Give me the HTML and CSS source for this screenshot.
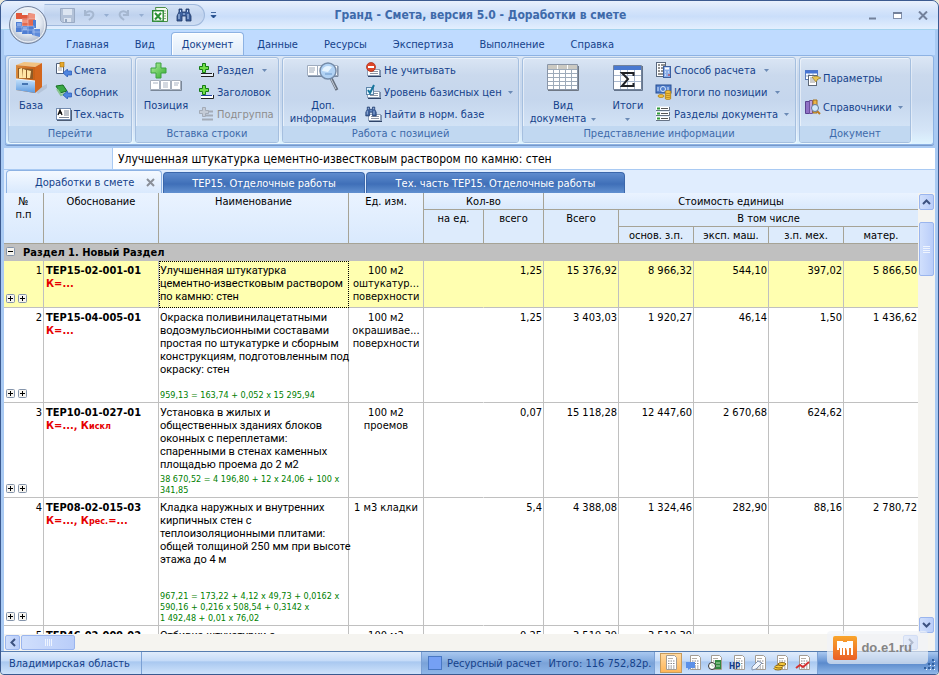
FILE: index.html
```html
<!DOCTYPE html>
<html lang="ru">
<head>
<meta charset="utf-8">
<title>Гранд - Смета, версия 5.0 - Доработки в смете</title>
<link rel="stylesheet" href="styles.css">
</head>
<body>
<svg class="defs" aria-hidden="true">
  <defs>
    <linearGradient id="wood" x1="0" x2="1"><stop offset="0" stop-color="#d98a3c"/><stop offset="1" stop-color="#c85f16"/></linearGradient>
    <linearGradient id="drawer" x1="0" x2="0" y2="1"><stop offset="0" stop-color="#c6e2fb"/><stop offset="1" stop-color="#5e9be0"/></linearGradient>
    <linearGradient id="green" x1="0" x2="1" y2="1"><stop offset="0" stop-color="#b4f0a0"/><stop offset="1" stop-color="#2faa2c"/></linearGradient>
    <linearGradient id="orange" x1="0" x2="0" y2="1"><stop offset="0" stop-color="#f9a52c"/><stop offset="1" stop-color="#ea5f26"/></linearGradient>
    <radialGradient id="orb" cx=".5" cy=".4" r=".7"><stop offset="0" stop-color="#fff"/><stop offset=".5" stop-color="#e3e9f1"/><stop offset="1" stop-color="#8f9db5"/></radialGradient>
    <symbol id="arrow-left" viewBox="0 0 9 8"><path d="M0 4 4.500 0v2H8.500v4H4.500v2z" fill="#4f86e0" stroke="#2356b4" stroke-width=".7"/></symbol>
    <symbol id="caret" viewBox="0 0 5 3"><path d="M0 0h5L2.500 3z" fill="#6b8ab5"/></symbol>
    <symbol id="plus-box" viewBox="0 0 9 9"><rect x=".5" y=".5" width="8" height="8" rx="1" fill="#f6f4ef" stroke="#8494ab"/><path d="M2 4.500h5M4.500 2v5" stroke="#000"/></symbol>
    <symbol id="minus-box" viewBox="0 0 9 9"><rect x=".5" y=".5" width="8" height="8" rx="1" fill="#f6f4ef" stroke="#8494ab"/><path d="M2 4.500h5" stroke="#000"/></symbol>
    <symbol id="binoculars" viewBox="0 0 16 14"><path d="M3 1h3v3h4V1h3v3l2 4v5h-5V8H6v5H1V8l2-4z" fill="#3d609c" stroke="#1d3566" stroke-width=".8"/><path d="M3 6v5M4.500 2v2M12 6v5M11.500 2v2M8 5v2" stroke="#bcd4f5"/></symbol>
    <symbol id="card" viewBox="0 0 14 8"><rect x=".5" y=".5" width="12" height="6" fill="#fff" stroke="#8fa0b8"/><path d="M1 7.500h13V1" stroke="#2f4468" fill="none"/><path d="M3 2.500h8M3 4.500h8" stroke="#8d96a5"/></symbol>
    <symbol id="sheet" viewBox="0 0 13 15"><path d="M1.500.5h8l2 2v12h-10z" fill="#fff" stroke="#a39c93"/><path d="M3 3.500h5" stroke="#b5aea5"/><path d="M3 6h7M3 8.500h7M3 11h7M3 13h7" stroke="#888" stroke-dasharray="1.500 1"/></symbol>
  </defs>
</svg>
<div class="window">
  <header class="titlebar">
    <div class="quick-access">
      <button aria-label="Сохранить"><svg width="15" height="15" viewBox="0 0 15 15"><path d="M.5.5h14v14h-12l-2-2z" fill="#b3c2d8" stroke="#9aabc4"/><path d="M3 1h9v6H3zM4 10h7v4H4z" fill="#dce5f1"/><path d="M5 11h2v3H5z" fill="#94a6c0"/></svg></button>
      <button aria-label="Отменить"><svg width="13" height="12" viewBox="0 0 13 12"><path d="M2 1v5h5M2 5c4-5 10-2 8 2-1 2-3 3-4 4" fill="none" stroke="#a5b7d0" stroke-width="2"/></svg></button>
      <svg class="dim" width="5" height="3"><use href="#caret"/></svg>
      <button aria-label="Вернуть"><svg width="13" height="12" viewBox="0 0 13 12"><path d="M11 1v5H6M11 5C7 0 1 3 3 7c1 2 3 3 4 4" fill="none" stroke="#a5b7d0" stroke-width="2"/></svg></button>
      <svg class="dim" width="5" height="3"><use href="#caret"/></svg>
      <button aria-label="Экспорт в таблицу"><svg width="16" height="16" viewBox="0 0 16 16"><path d="M3.500.5h10l2 2v12h-10z" fill="#f2f8ee" stroke="#4b8c47"/><path d="M12 4h2M12 6.500h2M12 9h2M12 11.500h2" stroke="#8cad88"/><rect x=".7" y="3.700" width="10.500" height="10.500" fill="#fff" stroke="#288830" stroke-width="1.400"/><path d="m3 6 6 6.500M9 6l-6 6.500" stroke="#2c9236" stroke-width="2"/></svg></button>
      <button aria-label="Найти"><svg width="16" height="14"><use href="#binoculars"/></svg></button>
    </div>
    <button class="qat-more" aria-label="Настройка панели"><svg width="7" height="7" viewBox="0 0 7 7"><path d="M1 .5h5M1 3.500h5L3.500 6z" fill="#1e4a8a" stroke="#1e4a8a" stroke-width=".8"/></svg></button>
    <h1>Гранд - Смета, версия 5.0 - Доработки в смете</h1>
    <div class="window-buttons">
      <button aria-label="Свернуть"><svg width="9" height="9"><path d="M1 7.500h7" stroke="#73819b" stroke-width="2"/></svg></button>
      <button aria-label="Развернуть"><svg width="9" height="9" viewBox="0 0 9 9"><rect x=".5" y="1.500" width="8" height="6" fill="#fff" stroke="#8290aa"/><path d="M0 2h9" stroke="#73819b" stroke-width="2"/></svg></button>
      <button aria-label="Закрыть"><svg width="10" height="9" viewBox="0 0 10 9"><path d="m1 .5 8 8M9 .5l-8 8" stroke="#73819b" stroke-width="2"/></svg></button>
    </div>
  </header>
  <button class="orb" aria-label="Меню программы"><svg width="40" height="40" viewBox="0 0 40 40"><circle cx="20" cy="20" r="18.500" fill="url(#orb)" stroke="#74839e"/><circle cx="20" cy="20" r="17" fill="none" stroke="#f5f8fc"/>
    <path d="M8 8h6v6H8zM14 10h6v4h-6z" fill="#e0583c"/><path d="M14 14h7v7h-7zM20 8l7 1v12h-7z" fill="#e4694f"/><path d="M21 9h6v5h-6zM14 15h6v3h-6z" fill="#f0937d"/><path d="M8 17h6v10H8zM14 21h12v8H14zM25 15h3v8h-3z" fill="#4f7ed3"/><path d="M24 24h8v8l-8-2z" fill="#5f8cdb"/><path d="M9 18h4v3H9zM15 22h4v3h-4z" fill="#89acea"/><path d="M8 22h6M14 25h12M14 14v14M20 8v21M26 21v10M14 14h13M14 21h12M24 27h8" stroke="#e3eaf7" stroke-width=".4"/></svg></button>
  <nav class="ribbon-tabs">
    <a href="#">Главная</a><a href="#">Вид</a><a href="#" class="current">Документ</a><a href="#">Данные</a><a href="#">Ресурсы</a><a href="#">Экспертиза</a><a href="#">Выполнение</a><a href="#">Справка</a>
  </nav>
  <section class="ribbon">
    <div class="group go">
      <div class="tools">
        <button class="big"><svg width="32" height="34" viewBox="0 0 32 34"><path d="M20 29 32 23v4l-9 6z" fill="#a9b7cb" opacity=".6"/><path d="M1 4 9 1l18 1-7 4z" fill="#f2c281"/><path d="M1 4l19 2v26L1 29z" fill="url(#wood)"/><path d="M20 6l7-4v24l-7 6z" fill="#d3661d"/><path d="M3 7l15 1v10L3 17z" fill="#8d5a26"/><path d="M4 8l3-1 1 10H4zM8 8l3 1v8H8zM12 9l4 1-1 7h-3z" fill="#ffe5a5"/><path d="M1 18l19 2v12L1 29z" fill="url(#drawer)"/><path d="M1 18l19 2" stroke="#eaf6ff"/><path d="M7 23h6" stroke="#4575b2" stroke-width="2"/></svg><span>База</span></button>
        <div class="small-tools">
          <button><svg width="18" height="16" viewBox="0 0 18 16"><path d="M1.500 1.500h7v10h-7z" fill="#fff" stroke="#50617c"/><path d="M5 0h4v5H5z" fill="#e6a82c" stroke="#a16d0b" stroke-width=".6"/><path d="M3 6h4M3 8h4" stroke="#aaa"/><use href="#arrow-left" x="8" y="7" width="9" height="8"/></svg>Смета</button>
          <button><svg width="18" height="16" viewBox="0 0 18 16"><path d="m1 2 7-1 4 6-7 2z" fill="#39a845" stroke="#166f21"/><path d="m2 5 4 6 6-2" fill="none" stroke="#8ac591" stroke-width="2"/><use href="#arrow-left" x="8" y="7" width="9" height="8"/></svg>Сборник</button>
          <button><svg width="18" height="16" viewBox="0 0 18 16"><rect x="1.500" y="2.500" width="14" height="11" fill="#fff" stroke="#738cb0"/><path d="M2 14.500h14.500V4" fill="none" stroke="#4d5c74"/><path d="m3 9 2-5 2 5M4 7h3" fill="none" stroke="#111" stroke-width="1.300"/><path d="M9 5h5M9 7h5M9 9h5M4 11.500h10" stroke="#7c8797"/></svg>Тех.часть</button>
        </div>
      </div>
      <h2>Перейти</h2>
    </div>
    <div class="group insert">
      <div class="tools">
        <button class="big"><svg width="32" height="34" viewBox="0 0 32 34"><path d="M6 2h5v5h5v5h-5v5H6v-5H1V7h5z" fill="url(#green)" stroke="#3ca241"/><path d="M.5 19.500h9v9h-9zM10.500 19.500h10v9h-10zM21.500 19.500h9v9h-9z" fill="#fff" stroke="#a7b0bd"/><path d="M.5 29.500h31V20" fill="none" stroke="#7a8798"/><path d="M3 22h5M13 22h5M13 24h5M13 26h5M24 22h5M24 24h4" stroke="#a9b3c2"/></svg><span>Позиция</span></button>
        <div class="small-tools">
          <button><svg width="18" height="16" viewBox="0 0 18 16"><path d="M3 12.500h12" stroke="#e8f1fb" stroke-width="3"/><path d="M3 11.500h11M3 14.500h12.500V11" fill="none" stroke="#222"/><path d="M4.500 1.500h3v3h3v3h-3v3h-3v-3h-3v-3h3z" fill="#72dd48" stroke="#147b15"/></svg>Раздел<svg class="drop" width="5" height="3"><use href="#caret"/></svg></button>
          <button><svg width="18" height="16" viewBox="0 0 18 16"><path d="M3 12.500h12" stroke="#fff" stroke-width="3"/><path d="M3 11.500h11" stroke="#2646a3"/><path d="M3 14.500h12.500V11" fill="none" stroke="#222"/><path d="M4.500 1.500h3v3h3v3h-3v3h-3v-3h-3v-3h3z" fill="#72dd48" stroke="#147b15"/></svg>Заголовок</button>
          <button disabled><svg width="18" height="16" viewBox="0 0 18 16"><path d="M8 5.500h7M8 9.500h7M4 13.500h11" stroke="#a3abb7" stroke-width="2"/><path d="M4.500 1.500h3v3h3v3h-3v3h-3v-3h-3v-3h3z" fill="#c4cbd6" stroke="#a3abb7"/></svg>Подгруппа</button>
        </div>
      </div>
      <h2>Вставка строки</h2>
    </div>
    <div class="group position">
      <div class="tools">
        <button class="big"><svg width="32" height="34" viewBox="0 0 32 34"><path d="M.5 4.500h10v10H.5zM10.500 4.500h20v10h-20z" fill="#fff" stroke="#9facbe"/><path d="M1 15.500h30V5" fill="none" stroke="#75859c"/><path d="M2 7h6M2 9h6M2 11h5" stroke="#9ca8b8"/><path d="m24 17 6 12" stroke="#656f7d" stroke-width="3"/><path d="m24 18 5 10" stroke="#c9d2dd"/><circle cx="21" cy="10" r="8" fill="#b1d2f4" stroke="#748ba9" stroke-width="1.500"/><path d="M15 10c1-5 6-6 10-4l-4 5z" fill="#e6f4ff"/><path d="M18 13h7" stroke="#6c99cb"/></svg><span>Доп.<br>информация</span></button>
        <div class="small-tools">
          <button><svg width="18" height="16" viewBox="0 0 18 16"><use href="#card" x="2" y="7" width="14" height="8"/><circle cx="6" cy="5" r="4.500" fill="#df472b" stroke="#a92b14" stroke-width=".7"/><path d="M3 5h6" stroke="#fff" stroke-width="2"/></svg>Не учитывать</button>
          <button><svg width="18" height="16" viewBox="0 0 18 16"><use href="#card" x="2" y="7" width="14" height="8"/><rect x="1.500" y="3.500" width="7" height="7" fill="#e1f1fc" stroke="#5e86aa"/><path d="m3 6 2 3 4-8" fill="none" stroke="#16759c" stroke-width="2"/></svg>Уровень базисных цен<svg class="drop near" width="5" height="3"><use href="#caret"/></svg></button>
          <button><svg width="18" height="16" viewBox="0 0 18 16"><use href="#card" x="3" y="8" width="14" height="8"/><use href="#binoculars" x="0" y="0" width="12" height="11"/></svg>Найти в норм. базе</button>
        </div>
      </div>
      <h2>Работа с позицией</h2>
    </div>
    <div class="group display">
      <div class="tools">
        <button class="big"><svg width="32" height="34" viewBox="0 0 32 34"><path d="M.5 3.500h30v25H.5z" fill="#fff" stroke="#8995a7"/><path d="M1 4h29v4H1z" fill="#cbc9c2"/><path d="M1 8.500h29M1 12.500h29M1 16.500h29M1 20.500h29M1 24.500h29M6.500 8v20M12.500 8v20M18.500 8v20M24.500 8v20" stroke="#9eabba"/><path d="M10.500 4v4M20.500 4v4" stroke="#fff"/><path d="M1 29.500h30.500V5" fill="none" stroke="#6f7885"/></svg><span>Вид<br>документа<svg class="drop near" width="5" height="3"><use href="#caret"/></svg></span></button>
        <button class="big totals"><svg width="32" height="34" viewBox="0 0 32 34"><path d="M1.500 4.500h28v24h-28z" fill="#fff" stroke="#73839b"/><path d="M2 5h27v4H2z" fill="#4979d0"/><path d="M2 14.500h27M2 20.500h27M8.500 9v19M15.500 9v19M22.500 9v19" stroke="#a9b8cf"/><path d="M2 29.500h28.500V5" fill="none" stroke="#65758c"/><path d="M21.500 15v-3H10l6 6-6 7h11.500v-3" fill="none" stroke="#202226" stroke-width="2"/></svg><span>Итоги<br><svg class="below" width="5" height="3"><use href="#caret"/></svg></span></button>
        <div class="small-tools">
          <button><svg width="18" height="16" viewBox="0 0 18 16"><rect x="1.500" y=".5" width="9" height="14" fill="#fff" stroke="#59687e"/><path d="M3 3h2M6 3h4M3 6h2M6 6h3M3 9h2M6 9h3M3 12h5" stroke="#222"/><rect x="8.500" y="4.500" width="7" height="11" fill="#8caee8" stroke="#3c60a1"/><path d="M10 6.500h4" stroke="#fff" stroke-width="2"/><path d="M10 10h1M13 10h1M10 13h1" stroke="#fff"/><path d="M13 13h2" stroke="#d12b2b"/></svg>Способ расчета<svg class="drop" width="5" height="3"><use href="#caret"/></svg></button>
          <button><svg width="18" height="16" viewBox="0 0 18 16"><rect x="1" y="1" width="15" height="8" fill="#5481cd" stroke="#254c91"/><circle cx="8" cy="5" r="2.500" fill="none" stroke="#d7e8ff"/><path d="M3 3v4M13 3v4" stroke="#d7e8ff"/><g fill="#f4c440" stroke="#a8750d" stroke-width=".7"><ellipse cx="6" cy="12" rx="3" ry="1.500"/><ellipse cx="13" cy="14" rx="3" ry="1.500"/><ellipse cx="13" cy="12" rx="3" ry="1.500"/><ellipse cx="13" cy="10" rx="3" ry="1.500"/><ellipse cx="13" cy="8" rx="3" ry="1.500"/></g></svg>Итоги по позиции<svg class="drop" width="5" height="3"><use href="#caret"/></svg></button>
          <button><svg width="18" height="16" viewBox="0 0 18 16"><path d="M1 2.500h13M1 7.500h13M1 12.500h13" stroke="#fff" stroke-width="4"/><path d="M1 4.500h13.500V1M1 9.500h13.500V6M1 14.500h13.500V11" fill="none" stroke="#667386"/><path d="M2 2.500h3M2 7.500h3M2 12.500h3" stroke="#2d9a35" stroke-width="2"/><path d="M6 2.500h7M6 7.500h7M6 12.500h7" stroke="#555"/></svg>Разделы документа<svg class="drop near" width="5" height="3"><use href="#caret"/></svg></button>
        </div>
      </div>
      <h2>Представление информации</h2>
    </div>
    <div class="group document">
      <div class="tools">
        <div class="small-tools">
          <button><svg width="18" height="16" viewBox="0 0 18 16"><rect x="1.500" y=".5" width="12" height="9" fill="#fff" stroke="#587abb"/><path d="M1 2h13" stroke="#4775d4" stroke-width="3"/><path d="M2 6h11M5 3v6M9 3v6" stroke="#8dabd6"/><rect x="4.500" y="5.500" width="8" height="10" fill="#fff" stroke="#5d6877"/><path d="M6 8h4M6 10h5M6 12h5" stroke="#999"/><path d="m8 7 5-1 4 2-3 1-2 3z" fill="#e9c451" stroke="#877024" stroke-width=".6"/></svg>Параметры</button>
          <button><svg width="18" height="16" viewBox="0 0 18 16"><path d="M1.500 2.500h4v12h-4z" fill="#9071c5" stroke="#5b4290"/><path d="M5.500 1.500h3v13h-3z" fill="#bda2dd" stroke="#6e51a0"/><path d="M9 1h4v13H9z" fill="#eab348" stroke="#a2711a"/><path d="m12 11 4 4" stroke="#bd7a22" stroke-width="2"/><circle cx="11" cy="9" r="3.500" fill="#d0e7fa" stroke="#60789a"/></svg>Справочники<svg class="drop near" width="5" height="3"><use href="#caret"/></svg></button>
        </div>
      </div>
      <h2>Документ</h2>
    </div>
  </section>
  <div class="formula-bar"><input type="text" aria-label="Содержимое ячейки" value="Улучшенная штукатурка цементно-известковым раствором по камню: стен"></div>
  <nav class="doc-tabs">
    <div class="doc-tab open"><a href="#">Доработки в смете</a><button aria-label="Закрыть вкладку"><svg width="9" height="9" viewBox="0 0 9 9"><path d="m1 1 7 7M8 1 1 8" stroke="#8a8f98" stroke-width="2"/></svg></button></div>
    <a class="doc-tab" href="#">ТЕР15. Отделочные работы</a>
    <a class="doc-tab wide" href="#">Тех. часть ТЕР15. Отделочные работы</a>
  </nav>
  <main class="sheet">
    <div class="viewport">
      <table>
        <colgroup><col class="c-no"><col class="c-code"><col class="c-name"><col class="c-cost"><col class="c-qty"><col class="c-qty"><col class="c-cost"><col class="c-cost"><col class="c-cost"><col class="c-cost"><col></colgroup>
        <thead>
          <tr><th rowspan="3">№<br>п.п</th><th rowspan="3">Обоснование</th><th rowspan="3">Наименование</th><th rowspan="3">Ед. изм.</th><th colspan="2">Кол-во</th><th colspan="5">Стоимость единицы</th></tr>
          <tr><th rowspan="2">на ед.</th><th rowspan="2">всего</th><th rowspan="2">Всего</th><th colspan="4">В том числе</th></tr>
          <tr><th>основ. з.п.</th><th>эксп. маш.</th><th>з.п. мех.</th><th>матер.</th></tr>
        </thead>
        <tbody>
          <tr class="section-row"><td colspan="11"><svg width="9" height="9"><use href="#minus-box"/></svg>Раздел 1. Новый Раздел</td></tr>
          <tr class="short selected"><td><div class="fill num">1<span><svg width="9" height="9"><use href="#plus-box"/></svg><svg width="9" height="9"><use href="#plus-box"/></svg></span></div></td><td class="code">ТЕР15-02-001-01<em>К=...</em></td><td class="focus">Улучшенная штукатурка<br>цементно-известковым раствором<br>по камню: стен</td><td class="unit">100 м2<br>оштукатур...<br>поверхности</td><td class="none"></td><td>1,25</td><td>15 376,92</td><td>8 966,32</td><td>544,10</td><td>397,02</td><td>5 866,50</td></tr>
          <tr class="medium"><td><div class="fill num">2<span><svg width="9" height="9"><use href="#plus-box"/></svg><svg width="9" height="9"><use href="#plus-box"/></svg></span></div></td><td class="code">ТЕР15-04-005-01<em>К=...</em></td><td><div class="fill name">Окраска поливинилацетатными<br>водоэмульсионными составами<br>простая по штукатурке и сборным<br>конструкциям, подготовленным под<br>окраску: стен<small>959,13 = 163,74 + 0,052 x 15 295,94</small></div></td><td class="unit">100 м2<br>окрашивае...<br>поверхности</td><td class="none"></td><td>1,25</td><td>3 403,03</td><td>1 920,27</td><td>46,14</td><td>1,50</td><td>1 436,62</td></tr>
          <tr class="medium"><td><div class="fill num">3<span><svg width="9" height="9"><use href="#plus-box"/></svg><svg width="9" height="9"><use href="#plus-box"/></svg></span></div></td><td class="code">ТЕР10-01-027-01<em>К=..., К<sub>искл</sub></em></td><td><div class="fill name">Установка в жилых и<br>общественных зданиях блоков<br>оконных с переплетами:<br>спаренными в стенах каменных<br>площадью проема до 2 м2<small>38 670,52 = 4 196,80 + 12 x 24,06 + 100 x<br>341,85</small></div></td><td class="unit">100 м2<br>проемов</td><td class="none"></td><td>0,07</td><td>15 118,28</td><td>12 447,60</td><td>2 670,68</td><td>624,62</td><td></td></tr>
          <tr class="tall"><td><div class="fill num">4<span><svg width="9" height="9"><use href="#plus-box"/></svg><svg width="9" height="9"><use href="#plus-box"/></svg></span></div></td><td class="code">ТЕР08-02-015-03<em>К=..., К<sub>рес.</sub>=...</em></td><td><div class="fill name">Кладка наружных и внутренних<br>кирпичных стен с<br>теплоизоляционными плитами:<br>общей толщиной 250 мм при высоте<br>этажа до 4 м<small>967,21 = 173,22 + 4,12 x 49,73 + 0,0162 x<br>590,16 + 0,216 x 508,54 + 0,3142 x<br>1 492,48 + 0,01 x 76,02</small></div></td><td class="unit">1 м3 кладки</td><td class="none"></td><td>5,4</td><td>4 388,08</td><td>1 324,46</td><td>282,90</td><td>88,16</td><td>2 780,72</td></tr>
          <tr class="short"><td>5</td><td class="code">ТЕР46-02-009-02</td><td class="name">Отбивка штукатурки с</td><td class="unit">100 м2</td><td class="none"></td><td>0,25</td><td>3 519,39</td><td>3 519,39</td><td></td><td></td><td></td></tr>
        </tbody>
      </table>
    </div>
    <div class="vscroll">
      <button aria-label="Вверх"><svg width="9" height="6" viewBox="0 0 9 6"><path d="m1 5 3.500-3.500L8 5" fill="none" stroke="#3d5280" stroke-width="2"/></svg></button>
      <div class="track"><div class="thumb"><i></i><i></i><i></i><i></i></div></div>
      <button aria-label="Вниз"><svg width="9" height="6" viewBox="0 0 9 6"><path d="m1 1 3.500 3.500L8 1" fill="none" stroke="#3d5280" stroke-width="2"/></svg></button>
    </div>
    <div class="hscroll">
      <button aria-label="Влево"><svg width="6" height="9" viewBox="0 0 6 9"><path d="M5 1 1.500 4.500 5 8" fill="none" stroke="#3d5280" stroke-width="2"/></svg></button>
      <div class="track"><div class="thumb"><i></i><i></i><i></i><i></i></div></div>
      <button aria-label="Вправо"><svg width="6" height="9" viewBox="0 0 6 9"><path d="m1 1 3.500 3.500L1 8" fill="none" stroke="#3d5280" stroke-width="2"/></svg></button>
    </div>
  </main>
  <footer class="status">
    <span class="region">Владимирская область</span>
    <span class="spacer"></span>
    <span class="calc"><i class="swatch"></i>Ресурсный расчет<b>Итого: 116 752,82р.</b></span>
    <span class="modes">
      <button class="on" aria-label="Смета"><svg width="17" height="16" viewBox="0 0 17 16"><use href="#sheet" x="2" width="13" height="15"/></svg></button>
      <button aria-label="Комментарий"><svg width="17" height="16" viewBox="0 0 17 16"><use href="#sheet" x="4" width="13" height="15"/><path d="M1 7h9v6H6l-3 2v-2H1z" fill="#5c91e8"/></svg></button>
      <button aria-label="Сроки"><svg width="17" height="16" viewBox="0 0 17 16"><use href="#sheet" x="3" width="13" height="15"/><path d="M8 5h6v9H8z" fill="#31893d"/><circle cx="5" cy="11" r="3.500" fill="#fff" stroke="#333"/><path d="M5 9v2h2M9 8h4M9 11h4" fill="none" stroke="#b8deb9"/></svg></button>
      <button aria-label="Накладные расходы"><svg width="17" height="16" viewBox="0 0 17 16"><use href="#sheet" x="4" width="13" height="15"/><text x="0" y="14" class="hp">НР</text></svg></button>
      <button aria-label="Правка"><svg width="17" height="16" viewBox="0 0 17 16"><use href="#sheet" x="3" width="13" height="15"/><path d="m1 12 6-6 4 2-6 6-4 1z" fill="#f2f6fc" stroke="#8394b0"/></svg></button>
      <button aria-label="Стоимость"><svg width="17" height="16" viewBox="0 0 17 16"><use href="#sheet" x="3" width="13" height="15"/><g fill="#ffd03e" stroke="#6d4c08" stroke-width=".8"><ellipse cx="5" cy="13.500" rx="4" ry="1.500"/><ellipse cx="6" cy="11.500" rx="4" ry="1.500"/><ellipse cx="9" cy="9" rx="4" ry="1.500"/></g></svg></button>
      <button aria-label="График"><svg width="17" height="16" viewBox="0 0 17 16"><use href="#sheet" x="3" width="13" height="15"/><path d="m1 13 4-3 3 2 6-5" fill="none" stroke="#d43232" stroke-width="2"/></svg></button>
    </span>
    <span class="grip"><svg width="12" height="12" viewBox="0 0 12 12"><path d="M8 0h2v2H8zM4 4h2v2H4zM8 4h2v2H8zM0 8h2v2H0zM4 8h2v2H4zM8 8h2v2H8z" fill="#315f9e"/><path d="M10 2h1v1h-1zM6 6h1v1H6zM10 6h1v1h-1zM2 10h1v1H2zM6 10h1v1H6zM10 10h1v1h-1z" fill="#fff"/></svg></span>
  </footer>
  <div class="watermark"><svg width="24" height="24" viewBox="0 0 24 24"><rect width="24" height="24" rx="2" fill="url(#orange)"/><path d="M4 5h6v1h4V5h6v14h-2v-7h-2v7h-2v-4l-1-3h-1v7h-2v-7H9v7H7v-7H6v2H4z" fill="#fff"/></svg>do.e1.ru</div>
</div>
</body>
</html>
```
FILE: styles.css
```css
* { box-sizing: border-box; }

body {
  margin: 0;
  background: #ece9d8;
  color: #000;
  font: 11px/13px "DejaVu Sans Condensed", Tahoma, "DejaVu Sans", sans-serif;
}

button {
  margin: 0;
  padding: 0;
  border: 0;
  background: none;
  color: inherit;
  font: inherit;
}

a { color: inherit; text-decoration: none; }
svg { flex: none; }
.defs { position: absolute; width: 0; height: 0; }

.window {
  position: relative;
  display: flex;
  flex-direction: column;
  height: 100vh;
  overflow: hidden;
  border: 1px solid #3b5a90;
  border-radius: 7px 7px 4px 4px;
  background: #a9caf3;
  color: #15428b;
}

/* Title bar */
.titlebar {
  display: flex;
  align-items: center;
  height: 29px;
  flex: none;
  padding: 0 10px 0 43px;
  border-bottom: 1px solid #a3d2ee;
  background: linear-gradient(#e9f1fd, #d6e5fb 30%, #cadefa 55%, #e3effe);
}
.quick-access {
  display: flex;
  align-items: center;
  justify-content: space-between;
  width: 161px;
  height: 22px;
  padding: 0 12px 0 15px;
  border: 1px solid #a0b9dd;
  border-left-color: transparent;
  border-radius: 0 11px 11px 0;
  background: linear-gradient(#d5e3f6, #bfd2ee 50%, #cfdef3);
}
.quick-access button, .qat-more, .window-buttons button { display: flex; }
.dim { opacity: .5; }
.qat-more { margin-left: 5px; }
h1 {
  flex: 1;
  margin: 0;
  color: #3e6aaa;
  font-size: 12px;
  line-height: 16px;
  text-align: center;
}
.window-buttons { display: flex; gap: 16px; margin-left: 124px; }
.orb { position: absolute; top: 4px; left: 7px; z-index: 2; height: 40px; }

/* Ribbon */
.ribbon-tabs {
  display: flex;
  align-items: flex-end;
  flex: none;
  height: 25px;
  padding-left: 49px;
  border: solid #a9caf3;
  border-width: 0 3px;
  background: #bfdbff;
}
.ribbon-tabs a {
  display: flex;
  align-items: center;
  height: 22px;
  padding: 0 12px;
  border: 1px solid transparent;
  border-bottom: 0;
  border-radius: 4px 4px 0 0;
}
.ribbon-tabs .current {
  height: 23px;
  margin-left: 3px;
  padding: 0 10px;
  border-color: #8db2e3;
  background: linear-gradient(#f7fbff, #dfebf9);
  box-shadow: inset 1px 1px #fff;
}
.ribbon {
  display: flex;
  gap: 3px;
  flex: none;
  margin: 0 4px;
  padding: 1px 2px;
  border: 1px solid #8db2e3;
  border-radius: 3px;
  background: linear-gradient(#dce7f5, #cad9ed 22%, #c5d6ed 50%, #d5e5f7 85%, #dff4ff);
  box-shadow: 0 1px #7698ca;
}
.group {
  flex: none;
  overflow: hidden;
  border: 1px solid #a5bfdf;
  border-radius: 3px;
  box-shadow: inset 1px 1px rgba(255, 255, 255, .5), 1px 1px rgba(255, 255, 255, .4);
}
.go { min-width: 124px; }
.insert { min-width: 144px; }
.position { min-width: 237px; }
.display { min-width: 274px; }
.document { min-width: 112px; }
.group h2 {
  margin: 0;
  background: #c1d8f1;
  color: #3e6aaa;
  font-size: 11px;
  font-weight: 400;
  line-height: 16px;
  text-align: center;
}
.tools { display: flex; height: 68px; padding-top: 1px; }
.big {
  display: flex;
  flex-direction: column;
  align-items: center;
  gap: 4px;
  width: 80px;
  padding-top: 2px;
}
.big span { white-space: nowrap; }
.go .big { width: 44px; }
.insert .big { width: 60px; }
.big.totals { width: 50px; }
.small-tools { display: flex; flex-direction: column; padding-left: 2px; }
.small-tools button {
  display: flex;
  align-items: center;
  gap: 1px;
  height: 22px;
  white-space: nowrap;
}
.small-tools button:disabled { color: #8d8d8d; }
.drop { margin-left: 7px; vertical-align: middle; }
.drop.near { margin-left: 5px; }
.below { vertical-align: middle; }
.document .small-tools { justify-content: center; gap: 7px; padding-left: 4px; }

/* Cell editor and document tabs */
.formula-bar {
  flex: none;
  margin: 3px 3px 0;
  padding-left: 108px;
  background: #e0edfe;
}
.formula-bar input {
  display: block;
  width: 100%;
  height: 21px;
  padding: 0 5px;
  border: 0;
  border-left: 1px solid #a9caf3;
  background: #fff;
  font: 12px/18px "DejaVu Sans Condensed", Tahoma, "DejaVu Sans", sans-serif;
}
.doc-tabs {
  display: flex;
  align-items: flex-end;
  gap: 1px;
  flex: none;
  height: 24px;
  margin: 0 3px;
  padding-left: 2px;
  border-top: 1px solid #a9caf3;
  background: #e0edfe;
}
.doc-tab {
  display: flex;
  align-items: center;
  justify-content: center;
  min-width: 202px;
  height: 21px;
  border: 1px solid #3b67ab;
  border-bottom: 0;
  border-radius: 4px 4px 0 0;
  background: linear-gradient(#5f8cce, #3f6fb8 55%, #6190d0);
  color: #fff;
}
.doc-tab.wide { min-width: 259px; }
.doc-tab.open {
  justify-content: space-between;
  min-width: 156px;
  height: 23px;
  padding: 0 6px 0 28px;
  border-color: #8db2e3;
  background: linear-gradient(#f4f9ff, #d9e9fd);
  color: #15428b;
}
.doc-tab.open button { display: flex; }

/* Estimate table */
.sheet {
  display: grid;
  grid-template: minmax(0, 1fr) 17px / minmax(0, 1fr) 17px;
  flex: 1;
  min-height: 0;
  margin: 0 3px;
  background: #f5f4f0;
}
.viewport { overflow: hidden; background: #fff; color: #000; }
table {
  width: 100%;
  table-layout: fixed;
  border-collapse: separate;
  border-spacing: 0;
}
.c-no { width: 40px; }
.c-code { width: 115px; }
.c-name { width: 190px; }
.c-cost { width: 75px; }
.c-qty { width: 60px; }
th, td {
  padding: 3px 1px 0;
  border: solid #a8a8a0;
  border-width: 0 1px 1px 0;
  text-align: right;
  vertical-align: top;
  white-space: nowrap;
}
th {
  height: 17px;
  padding-top: 2px;
  border-color: #a6a396;
  background: #ddebfc;
  font-weight: 400;
  text-align: center;
}
thead tr:first-child th { background: linear-gradient(#eaf3ff, #d9e9fd); }
td { border-color: #c0c0c0; }
tr > :last-child { border-right: 0; }
.section-row td {
  height: 17px;
  padding: 2px 2px 1px;
  border-color: #c0c0c0;
  background: #c0c0c0;
  font-weight: 700;
  text-align: left;
}
.section-row svg { margin-right: 8px; }
.short td { height: 47px; }
.medium td { height: 95px; }
.tall td { height: 128px; }
.selected td { background: #ffffb0; }
.fill { display: flex; flex-direction: column; height: 100%; }
.num { justify-content: space-between; }
.num span { display: flex; gap: 3px; padding: 0 0 4px 1px; }
.code { padding-left: 2px; font-weight: 700; text-align: left; }
.code em { display: block; color: #e60000; font-style: normal; }
sub { font-size: 9px; line-height: 9px; vertical-align: baseline; }
.name, .focus { text-align: left; font-family: Roboto, Tahoma, sans-serif; }
.focus { padding: 2px 0 0; border: 1px dotted #000; }
.unit { text-align: center; }
.none { border-right-color: transparent; }
.selected .none { border-right-color: #ffffb0; }
small {
  display: block;
  margin-top: auto;
  padding-bottom: 1px;
  color: #008000;
  font-family: "DejaVu Sans Condensed", Tahoma, sans-serif;
  font-size: 9px;
  line-height: 11px;
}

/* Scroll bars */
.vscroll, .hscroll { display: flex; padding: 1px; }
.vscroll { flex-direction: column; }
.hscroll { grid-column: 1 / -1; padding-right: 17px; }
.vscroll button, .hscroll button, .thumb {
  display: flex;
  align-items: center;
  justify-content: center;
  border: 1px solid #9ab5ee;
  border-radius: 2px;
  background: linear-gradient(90deg, #d0dffc, #b9cdf9);
}
.vscroll button { height: 16px; }
.hscroll button { width: 15px; }
.track { flex: 1; padding: 12px 0 0; }
.hscroll .track { padding: 0 0 0 1px; }
.thumb { gap: 1px; }
.thumb i { background: #eef4fe; }
.vscroll .thumb { flex-direction: column; height: 54px; }
.vscroll .thumb i { width: 7px; height: 1px; }
.hscroll .thumb { width: 54px; height: 15px; }
.hscroll .thumb i { width: 1px; height: 7px; }

/* Status bar */
.status {
  display: flex;
  flex: none;
  height: 23px;
  border-top: 1px solid #567db0;
  background: linear-gradient(#e0ecfc, #c5dbf8 40%, #a9c8f0 45%, #cfe3fb);
}
.status > span { display: flex; align-items: center; border-right: 1px solid #7ba0d4; }
.region { min-width: 141px; padding-left: 8px; }
.status .spacer { flex: 1; }
.calc {
  gap: 5px;
  min-width: 233px;
  padding-left: 6px;
  background: linear-gradient(#a9c8f0, #85acdf 40%, #7aa2d8 50%, #8fb7e8);
}
.calc b { margin-left: 2px; font-weight: 400; }
.swatch { width: 14px; height: 14px; border: 1px solid #4978c4; background: #75a0f4; }
.modes { padding: 0 3px 0 5px; }
.modes button {
  display: flex;
  align-items: center;
  justify-content: center;
  width: 22px;
  height: 20px;
}
.modes .on { border: 1px solid #c69b5c; background: linear-gradient(#ffd9a0, #ffb658); }
.hp { fill: #173d8e; font-size: 8px; font-weight: 700; }
.status .grip {
  align-items: flex-end;
  justify-content: flex-end;
  width: 120px;
  padding: 0 2px 3px 0;
  border-right: 0;
  background: linear-gradient(#a9c8f0, #6d99d6 40%, #5b8acc 50%, #8fb7e8);
}

.watermark {
  position: absolute;
  right: 10px;
  bottom: 10px;
  display: flex;
  align-items: center;
  gap: 4px;
  height: 33px;
  padding: 0 16px 0 6px;
  border-radius: 4px;
  background: rgba(240, 243, 247, .65);
  color: #858585;
  font: 700 13px/16px "Liberation Sans", Arial, sans-serif;
}
```
